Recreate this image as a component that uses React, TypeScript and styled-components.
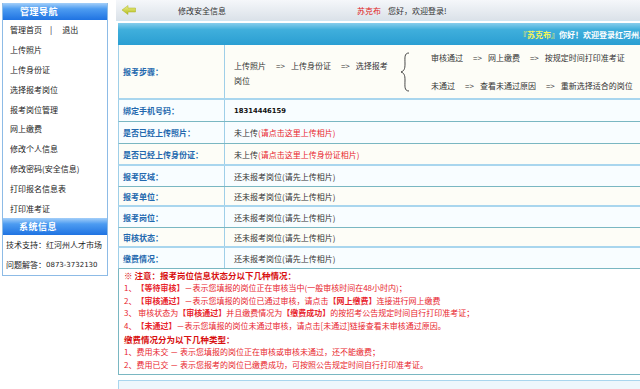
import React from 'react';
import styled, { createGlobalStyle } from 'styled-components';

const GlobalStyle = createGlobalStyle`
  html, body {
    margin: 0;
    padding: 0;
    background: #fff;
  }
  body {
    font-family: "Noto Sans CJK SC", "Liberation Sans", sans-serif;
    font-size: 8px;
    color: #333;
  }
`;

const Page = styled.div`
  width: 640px;
  height: 389px;
  overflow: hidden;
  display: flex;
  align-items: flex-start;
`;

/* ---------- sidebar ---------- */

const Sidebar = styled.aside`
  flex: none;
  box-sizing: border-box;
  width: 106px;
  margin: 3px 0 0 2px;
  border: 1px solid #8dbbe6;
  border-top: none;
`;

const SideHeader = styled.div<{ $indent?: number }>`
  height: 17px;
  display: flex;
  align-items: center;
  padding-left: ${(p) => p.$indent ?? 17}px;
  background: linear-gradient(#a4cff9 0%, #4d9cf1 35%, #1f73e2 100%);
  color: #fff;
  font-size: 9px;
  font-weight: bold;
  letter-spacing: 0.5px;
`;

const NavList = styled.ul`
  list-style: none;
  margin: 0;
  padding: 0;
`;

const NavItem = styled.li`
  height: 19.8px;
  display: flex;
  align-items: center;
  padding-left: 7px;
  color: #222;
  white-space: nowrap;
`;

const Sep = styled.span`
  margin: 0 10px 0 8px;
`;

const InfoRow = styled.div`
  height: 20px;
  display: flex;
  align-items: center;
  padding-left: 3px;
  color: #222;
  white-space: nowrap;
`;

const Digits = styled.span`
  font-family: "DejaVu Sans", sans-serif;
  font-size: 7px;
`;

/* ---------- main ---------- */

const Main = styled.main`
  flex: none;
  width: 700px;
  margin-left: 8px;
  display: flex;
  flex-direction: column;
`;

const TopBar = styled.div`
  height: 20px;
  display: flex;
  align-items: center;
  padding-left: 6px;
  background: linear-gradient(#f5f7fa, #dbe2e9);
  border-bottom: 1px solid #d2e6f2;
  white-space: nowrap;
`;

const PageTitle = styled.span`
  width: 179px;
  margin-left: 42px;
  color: #333;
`;

const UserName = styled.span`
  color: #e02020;
  margin-right: 7px;
`;

const Frame = styled.div`
  margin: 2px 0 0 2px;
`;

const Band = styled.div`
  height: 22px;
  display: flex;
  align-items: center;
  padding-left: 401px;
  background: linear-gradient(#86cdec 0%, #40afdc 30%, #2a9ed2 100%);
  color: #fff;
  font-weight: bold;
  white-space: nowrap;
  overflow: hidden;
`;

const Yellow = styled.span`
  color: #f4f45a;
`;

const Row = styled.div<{ $h: number; $tone: 'light' | 'teal' }>`
  box-sizing: border-box;
  height: ${(p) => p.$h}px;
  display: grid;
  grid-template-columns: 106px 1fr;
  border-left: 1px solid #9fcfe8;
  border-bottom: ${(p) =>
    p.$tone === 'light' ? '2px solid #a9d6ee' : '1px solid #7ab7c2'};
  background: ${(p) => (p.$tone === 'light' ? '#fdfdf7' : '#f8fdff')};
`;

const Label = styled.div`
  display: flex;
  align-items: center;
  padding-left: 4px;
  border-right: 1px solid #9fcfe8;
  color: #2368ae;
  font-weight: bold;
  white-space: nowrap;
`;

const Value = styled.div`
  display: flex;
  align-items: center;
  padding-left: 9px;
  color: #333;
  white-space: nowrap;
`;

const Phone = styled.span`
  font-family: "DejaVu Sans", sans-serif;
  font-weight: bold;
  font-size: 6.8px;
  color: #111;
`;

const Red = styled.span`
  color: #e8242c;
`;

const Steps = styled.div`
  display: flex;
  align-items: center;
  padding-left: 9px;
`;

const StepBlock = styled.div`
  width: 158px;
  line-height: 15px;
  white-space: nowrap;
  margin-top: 2px;
`;

const StepLines = styled.div`
  display: flex;
  flex-direction: column;
  gap: 17px;
  margin-left: 20px;
  white-space: nowrap;
`;

const Arr = styled.span`
  margin: 0 6px 0 10px;
`;

const Brace = styled.svg`
  margin-left: 7px;
  flex: none;
`;

const Notice = styled.div`
  box-sizing: border-box;
  height: 106px;
  padding: 0 5px;
  border: 1px solid #7ab7c2;
  border-top: none;
  color: #e8242c;
  line-height: 12.8px;
  white-space: nowrap;
`;

const NoticeHead = styled.div`
  font-weight: bold;
  color: #d81010;
  font-size: 8.5px;
`;

const Tag = styled.span`
  font-weight: bold;
`;

const Footer = styled.div`
  height: 20px;
  margin-top: 5px;
  border: 1px solid #a9d6ee;
  background: #eef7fc;
`;

const BackArrow = () => (
  <svg width="14" height="10" viewBox="0 0 14 10">
    <defs>
      <linearGradient id="ag" x1="0" y1="0" x2="0" y2="1">
        <stop offset="0" stopColor="#eef08a" />
        <stop offset="1" stopColor="#b4bc1e" />
      </linearGradient>
    </defs>
    <path d="M0 5 L6 0.5 L6 3 L13.5 3 L13.5 7 L6 7 L6 9.5 Z" fill="url(#ag)" stroke="#a8b020" strokeWidth="0.5" />
  </svg>
);

const navItems = [
  '上传照片',
  '上传身份证',
  '选择报考岗位',
  '报考岗位管理',
  '网上缴费',
  '修改个人信息',
  '修改密码(安全信息)',
  '打印报名信息表',
  '打印准考证',
];

const pending = '还未报考岗位(请先上传相片)';

const App: React.FC = () => (
  <>
    <GlobalStyle />
    <Page>
      <Sidebar>
        <SideHeader>管理导航</SideHeader>
        <NavList>
          <NavItem>
            管理首页<Sep>|</Sep>退出
          </NavItem>
          {navItems.map((item) => (
            <NavItem key={item}>{item}</NavItem>
          ))}
        </NavList>
        <SideHeader $indent={16}>系统信息</SideHeader>
        <InfoRow>技术支持：红河州人才市场</InfoRow>
        <InfoRow>
          问题解答：<Digits>0873-3732130</Digits>
        </InfoRow>
      </Sidebar>

      <Main>
        <TopBar>
          <BackArrow />
          <PageTitle>修改安全信息</PageTitle>
          <UserName>苏克布</UserName>
          您好，欢迎登录!
        </TopBar>

        <Frame>
          <Band>
            <Yellow>『苏克布』</Yellow>你好！欢迎登录红河州人才市场网上报名系统！
          </Band>

          <Row $h={55} $tone="light">
            <Label>报考步骤：</Label>
            <Steps>
              <StepBlock>
                上传照片<Arr>=&gt;</Arr>上传身份证<Arr>=&gt;</Arr>选择报考
                <br />
                岗位
              </StepBlock>
              <Brace width="12" height="40" viewBox="0 0 12 40">
                <path
                  d="M10 1 C5 1 6 6 6 12 C6 17 5 19 2 20 C5 21 6 23 6 28 C6 34 5 39 10 39"
                  fill="none"
                  stroke="#333"
                  strokeWidth="0.9"
                />
              </Brace>
              <StepLines>
                <span>
                  审核通过<Arr>=&gt;</Arr>网上缴费<Arr>=&gt;</Arr>按规定时间打印准考证
                </span>
                <span>
                  未通过<Arr>=&gt;</Arr>查看未通过原因<Arr>=&gt;</Arr>重新选择适合的岗位
                </span>
              </StepLines>
            </Steps>
          </Row>
          <Row $h={22} $tone="teal">
            <Label>绑定手机号码：</Label>
            <Value>
              <Phone>18314446159</Phone>
            </Value>
          </Row>
          <Row $h={22} $tone="teal">
            <Label>是否已经上传照片：</Label>
            <Value>
              未上传<Red>(请点击这里上传相片)</Red>
            </Value>
          </Row>
          <Row $h={22} $tone="light">
            <Label>是否已经上传身份证：</Label>
            <Value>
              未上传<Red>(请点击这里上传身份证相片)</Red>
            </Value>
          </Row>
          <Row $h={21} $tone="teal">
            <Label>报考区域：</Label>
            <Value>{pending}</Value>
          </Row>
          <Row $h={20} $tone="light">
            <Label>报考单位：</Label>
            <Value>{pending}</Value>
          </Row>
          <Row $h={21} $tone="teal">
            <Label>报考岗位：</Label>
            <Value>{pending}</Value>
          </Row>
          <Row $h={20} $tone="light">
            <Label>审核状态：</Label>
            <Value>{pending}</Value>
          </Row>
          <Row $h={21} $tone="teal">
            <Label>缴费情况：</Label>
            <Value>{pending}</Value>
          </Row>

          <Notice>
            <NoticeHead>※ 注意：报考岗位信息状态分以下几种情况：</NoticeHead>
            <div>
              1、<Tag>【等待审核】</Tag>－表示您填报的岗位正在审核当中(一般审核时间在48小时内)；
            </div>
            <div>
              2、<Tag>【审核通过】</Tag>－表示您填报的岗位已通过审核，请点击<Tag>【网上缴费】</Tag>连接进行网上缴费
            </div>
            <div>
              3、 审核状态为<Tag>【审核通过】</Tag>并且缴费情况为<Tag>【缴费成功】</Tag>的按招考公告规定时间自行打印准考证；
            </div>
            <div>
              4、<Tag>【未通过】</Tag>－表示您填报的岗位未通过审核，请点击[未通过]链接查看未审核通过原因。
            </div>
            <NoticeHead>缴费情况分为以下几种类型：</NoticeHead>
            <div>1、费用未交 － 表示您填报的岗位正在审核或审核未通过，还不能缴费；</div>
            <div>2、费用已交 － 表示您报考的岗位已缴费成功，可按照公告规定时间自行打印准考证。</div>
          </Notice>
          <Footer />
        </Frame>
      </Main>
    </Page>
  </>
);

export default App;
